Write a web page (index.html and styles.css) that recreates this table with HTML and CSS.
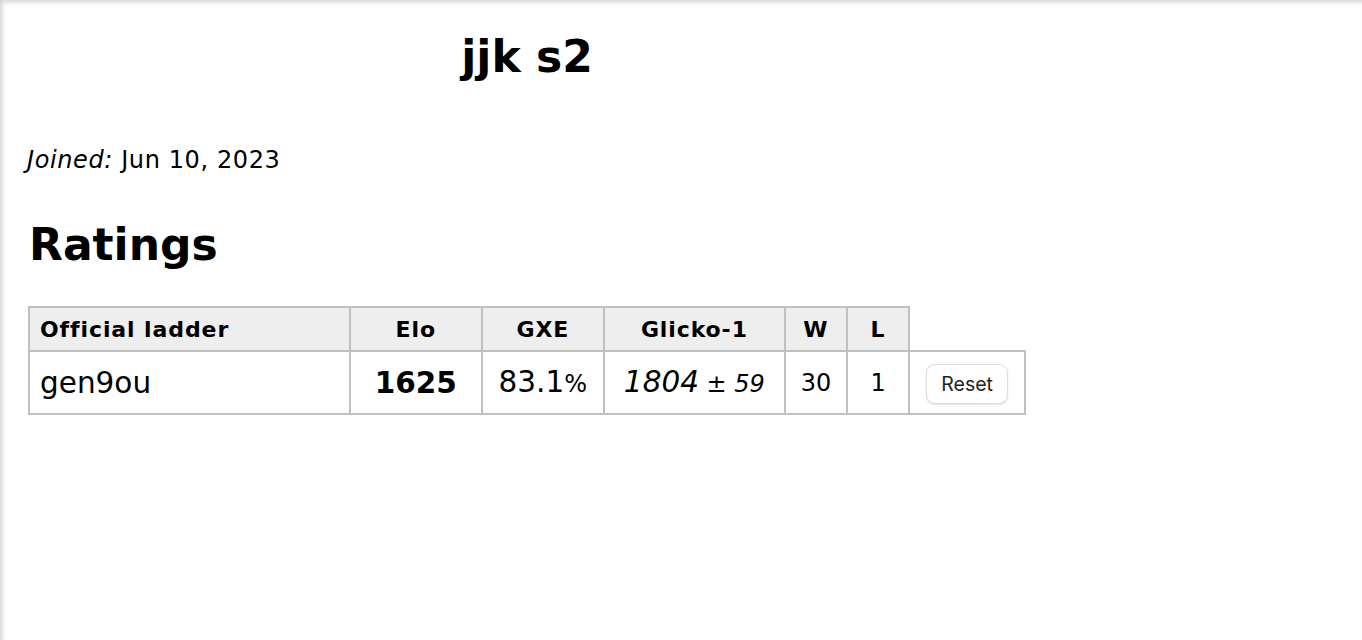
FILE: index.html
```html
<!DOCTYPE html>
<html>
<head>
<meta charset="utf-8">
<link rel="stylesheet" href="styles.css">
</head>
<body>
<div class="frame">
  <div class="page">
    <h1 class="title">jjk s2</h1>
    <p class="joined"><em>Joined:</em> Jun 10, 2023</p>
    <h2 class="section">Ratings</h2>
    <table class="ratings">
      <tr>
        <th class="c-ladder">Official ladder</th>
        <th class="c-elo">Elo</th>
        <th class="c-gxe">GXE</th>
        <th class="c-glicko">Glicko-1</th>
        <th class="c-w">W</th>
        <th class="c-l">L</th>
      </tr>
      <tr>
        <td class="c-ladder">gen9ou</td>
        <td class="c-elo num"><strong>1625</strong></td>
        <td class="c-gxe num">83.1<small>%</small></td>
        <td class="c-glicko num"><em>1804</em><small> ± <em>59</em></small></td>
        <td class="c-w num count">30</td>
        <td class="c-l num count">1</td>
        <td class="c-reset num"><button class="btn">Reset</button></td>
      </tr>
    </table>
  </div>
</div>
</body>
</html>
```

FILE: styles.css
```css
html, body {
  margin: 0;
  padding: 0;
  background: #fff;
}

.frame {
  min-height: 640px;
  box-shadow: inset 3px 3px 5px -1px rgba(0, 0, 0, 0.18);
  font-family: "DejaVu Sans", Verdana, sans-serif;
  color: #000;
}

.page {
  width: 1054px;
  box-sizing: border-box;
  padding: 28px 28px 0 28px;
}

.title {
  margin: 0;
  text-align: center;
  font-size: 44px;
  line-height: 58px;
  font-weight: bold;
}

.joined {
  margin: 60px 0 0 -1px;
  font-size: 24px;
  line-height: 28px;
  letter-spacing: 0.6px;
}

.section {
  margin: 45px 0 0 1px;
  font-size: 44px;
  line-height: 52px;
  font-weight: bold;
}

.ratings {
  margin-top: 35px;
  border-collapse: collapse;
}

.ratings th,
.ratings td {
  border: 2px solid #c0c0c0;
}

.ratings th {
  padding: 10px 10px 9px;
  background: #eeeeee;
  font-size: 22px;
  line-height: 23px;
  letter-spacing: 0.9px;
  font-weight: bold;
  text-align: center;
}

.ratings td {
  padding: 9px 10px 8px;
  font-size: 29.5px;
  line-height: 42px;
  text-align: left;
}

.ratings th.c-ladder { text-align: left; }
.ratings td.num { text-align: center; }
.ratings td.count { font-size: 24px; }

.ratings small { font-size: 24px; }

.c-ladder { width: 303px; }
.c-elo { width: 111px; }
.c-gxe { width: 100px; }
.c-glicko { width: 161px; }
.c-w { width: 40px; }
.c-l { width: 41px; }
.c-reset { width: 94px; }

.btn {
  font-family: Inter, "Liberation Sans", sans-serif;
  font-size: 19.5px;
  line-height: 22px;
  padding: 8px 14px;
  border: 1px solid #dcdcdc;
  border-radius: 9px;
  background: #fff;
  color: #222;
  box-shadow: 0 1px 2px rgba(0, 0, 0, 0.12);
  vertical-align: middle;
}
```
